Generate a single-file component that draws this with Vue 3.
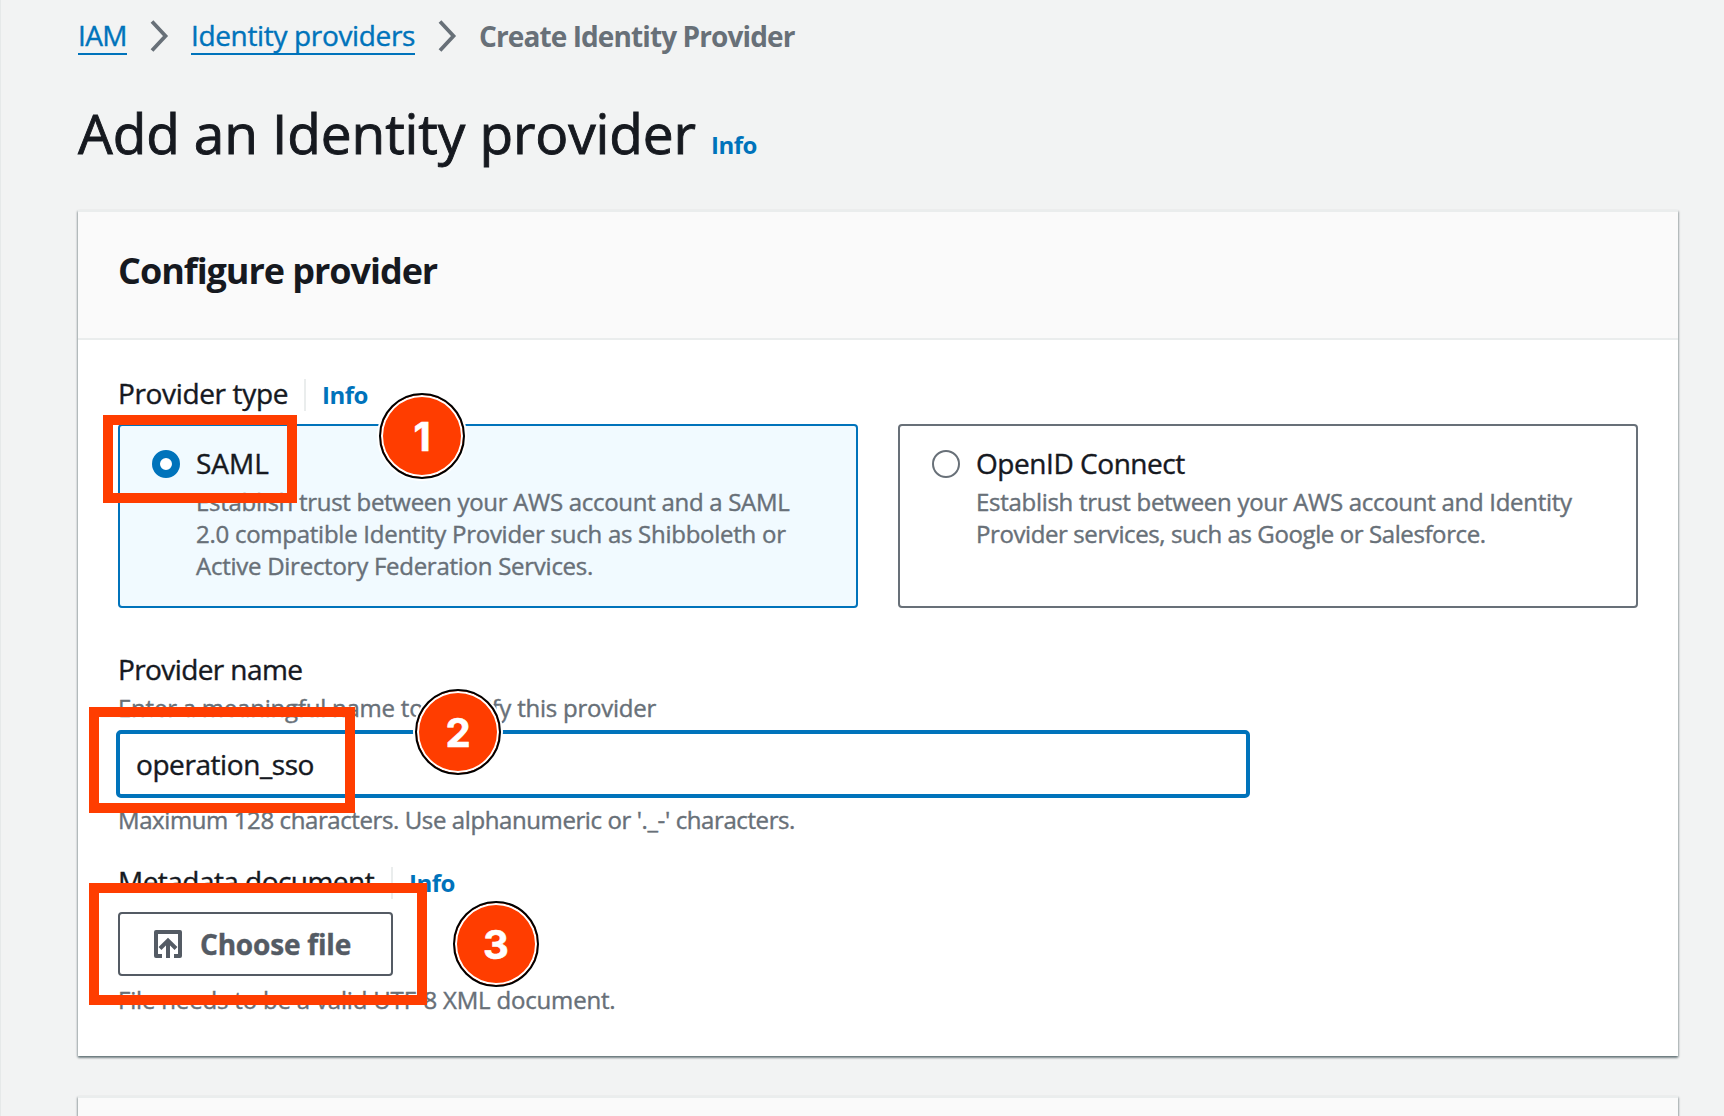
<script setup>
import { ref } from 'vue'

const selected = ref('saml')
const providerName = ref('operation_sso')

const types = [
  {
    id: 'saml',
    title: 'SAML',
    titleClass: 'track-none',
    lines: [
      { text: 'Establish trust between your AWS account and a SAML', cls: 'track-a' },
      { text: '2.0 compatible Identity Provider such as Shibboleth or', cls: 'track-b' },
      { text: 'Active Directory Federation Services.', cls: 'track-b' },
    ],
  },
  {
    id: 'oidc',
    title: 'OpenID Connect',
    titleClass: 'track-d',
    lines: [
      { text: 'Establish trust between your AWS account and Identity', cls: 'track-a' },
      { text: 'Provider services, such as Google or Salesforce.', cls: 'track-c' },
    ],
  },
]
</script>

<template>
  <div class="page">
    <nav class="crumbs">
      <a class="crumb-link iam">IAM</a>
      <svg class="chevron" width="20" height="32" viewBox="0 0 20 32"><path d="M2 1.5 15.5 16 2 30.5" /></svg>
      <a class="crumb-link providers">Identity providers</a>
      <svg class="chevron" width="20" height="32" viewBox="0 0 20 32"><path d="M2 1.5 15.5 16 2 30.5" /></svg>
      <span class="crumb-current">Create Identity Provider</span>
    </nav>

    <header class="heading">
      <h1>Add an Identity provider</h1>
      <a class="info">Info</a>
    </header>

    <section class="card">
      <div class="card-head"><h2>Configure provider</h2></div>
      <div class="card-body">
        <div class="label-row">
          <span class="label type-label">Provider type</span>
          <i class="sep"></i>
          <a class="info">Info</a>
        </div>

        <div class="tiles">
          <label v-for="t in types" :key="t.id" class="tile" :class="{ active: selected === t.id }">
            <span class="radio"></span>
            <span class="tile-text">
              <span class="tile-title" :class="t.titleClass">{{ t.title }}</span>
              <span v-for="l in t.lines" :key="l.text" class="hint" :class="l.cls">{{ l.text }}</span>
            </span>
          </label>
        </div>

        <div class="label name-label">Provider name</div>
        <div class="hint name-hint">Enter a meaningful name to identify this provider</div>
        <input v-model="providerName" class="field" type="text" spellcheck="false" />
        <div class="hint limit-hint">Maximum 128 characters. Use alphanumeric or '._-' characters.</div>

        <div class="label-row meta-row">
          <span class="label meta-label">Metadata document</span>
          <i class="sep"></i>
          <a class="info">Info</a>
        </div>
        <button class="file-btn" type="button">
          <svg width="28" height="28" viewBox="0 0 28 28">
            <path d="M8 26H2V2h24v24h-6" stroke-linejoin="round" />
            <path d="M14 28V10" />
            <path d="M6 18.5l8-8 8 8" />
          </svg>
          <span>Choose file</span>
        </button>
        <div class="hint file-hint">File needs to be a valid UTF-8 XML document.</div>
      </div>
    </section>

    <section class="card next-card"></section>

    <div class="mark mark-type"></div>
    <div class="mark mark-name"></div>
    <div class="mark mark-file"></div>
    <div class="step step-one">1</div>
    <div class="step step-two">2</div>
    <div class="step step-three">3</div>
  </div>
</template>

<style>
body {
  margin: 0;
  background: #f2f3f3;
}
</style>

<style scoped>
.page {
  position: relative;
  box-sizing: border-box;
  width: 1724px;
  height: 1116px;
  overflow: hidden;
  padding: 15px 46px 0 78px;
  background: #f2f3f3;
  box-shadow: inset 1px 0 0 #e6e9e9;
  font-family: "Open Sans", "Noto Sans", sans-serif;
  color: #16191f;
  -webkit-text-stroke-width: 0.4px;
}

.crumbs {
  display: flex;
  height: 40px;
  font-size: 28px;
  line-height: 40px;
  white-space: nowrap;
}
.crumb-link {
  box-sizing: border-box;
  height: 40px;
  color: #0073bb;
  border-bottom: 2px solid #0073bb;
}
.iam { width: 49px; letter-spacing: -0.6px; }
.providers { width: 224px; letter-spacing: -0.35px; }
.chevron {
  margin: 5px 21.5px 0 22.5px;
  fill: none;
  stroke: #687078;
  stroke-width: 3.8;
}
.crumb-current {
  padding-top: 1px;
  color: #687078;
  font-weight: 700;
  letter-spacing: -0.9px;
  -webkit-text-stroke-width: 0;
}

.heading {
  display: flex;
  align-items: baseline;
  height: 68px;
  margin: 43px 0 44px;
}
h1 {
  width: 633px;
  margin: 0;
  font-size: 55px;
  line-height: 69px;
  font-weight: 400;
  letter-spacing: -0.13px;
  white-space: nowrap;
  -webkit-text-stroke-width: 0.9px;
}
.info {
  color: #0073bb;
  font-size: 24px;
  line-height: 32px;
  font-weight: 700;
  letter-spacing: -0.5px;
  -webkit-text-stroke-width: 0;
}

.card {
  width: 1600px;
  height: 846px;
  box-sizing: border-box;
  background: #fff;
  border-top: 2px solid #eaeded;
  box-shadow: 0 2px 2px rgba(0, 28, 36, 0.4), 1px 1px 2px rgba(0, 28, 36, 0.2), -1px 1px 2px rgba(0, 28, 36, 0.2);
}
.card-head {
  box-sizing: border-box;
  height: 128px;
  padding: 37px 40px 0;
  background: #fafafa;
  border-bottom: 2px solid #eaeded;
}
h2 {
  margin: 0;
  font-size: 36px;
  line-height: 44px;
  font-weight: 700;
  letter-spacing: -1.05px;
  -webkit-text-stroke-width: 0;
}
.card-body {
  padding: 33px 40px 40px;
}
.label-row {
  display: flex;
  align-items: baseline;
  height: 40px;
}
.label {
  font-size: 28px;
  line-height: 40px;
  white-space: nowrap;
}
.type-label { width: 186px; letter-spacing: -0.35px; }
.sep {
  align-self: flex-start;
  width: 2px;
  height: 32px;
  margin: 6px 16px 0 0;
  background: #eaeded;
}

.tiles {
  display: flex;
  gap: 40px;
  margin-top: 11px;
}
.tile {
  display: flex;
  flex: 1;
  box-sizing: border-box;
  height: 184px;
  padding: 17px 28px 0;
  border: 2px solid #687078;
  border-radius: 4px;
}
.tile.active {
  border-color: #0073bb;
  background: #f1faff;
}
.radio {
  flex: none;
  box-sizing: border-box;
  width: 28px;
  height: 28px;
  margin: 7px 16px 0 4px;
  border: 2px solid #687078;
  border-radius: 50%;
  background: #fff;
}
.active .radio { border: 8px solid #0073bb; }
.tile-text { display: block; }
.tile-title {
  display: block;
  margin-bottom: 3px;
  font-size: 28px;
  line-height: 40px;
}
.hint {
  display: block;
  color: #687078;
  font-size: 24px;
  line-height: 32px;
  white-space: nowrap;
}
.track-none { letter-spacing: 0; }
.track-a { letter-spacing: -0.29px; }
.track-b { letter-spacing: -0.26px; }
.track-c { letter-spacing: -0.4px; }
.track-d { letter-spacing: -0.45px; }

.name-label { margin-top: 41px; letter-spacing: -0.6px; }
.name-hint { margin-top: 3px; letter-spacing: -0.23px; }
.field {
  display: block;
  box-sizing: border-box;
  width: 1134px;
  height: 68px;
  margin: 6px 0 6px -2px;
  padding: 0 16px 1px;
  border: 4px solid #0073bb;
  border-radius: 5px;
  outline: 0;
  background: #fff;
  color: #16191f;
  font-family: inherit;
  font-size: 28px;
  letter-spacing: -0.43px;
  -webkit-text-stroke-width: 0.4px;
}
.limit-hint { letter-spacing: -0.4px; }
.meta-row { margin-top: 25px; }
.meta-label { width: 273px; letter-spacing: -0.54px; }

.file-btn {
  display: flex;
  align-items: center;
  box-sizing: border-box;
  width: 275px;
  height: 64px;
  margin: 11px 0 8px;
  padding: 0 34px;
  border: 2px solid #545b64;
  border-radius: 4px;
  background: #fff;
  color: #545b64;
  font-family: inherit;
  font-size: 28px;
  line-height: 40px;
  font-weight: 700;
  letter-spacing: -0.19px;
  white-space: nowrap;
}
.file-btn svg {
  flex: none;
  margin-right: 18px;
  fill: none;
  stroke: #545b64;
  stroke-width: 4;
}
.file-hint { letter-spacing: -0.18px; }
.next-card {
  height: 60px;
  margin-top: 40px;
  background: #fafafa;
}

/* Walkthrough annotations laid over the form */
.mark {
  position: absolute;
  box-sizing: border-box;
  border: 10px solid #ff3d00;
}
.mark-type { left: 103px; top: 415px; width: 194px; height: 88px; }
.mark-name { left: 89px; top: 707px; width: 266px; height: 106px; }
.mark-file { left: 89px; top: 883px; width: 338px; height: 122px; }
.step {
  position: absolute;
  box-sizing: border-box;
  width: 86px;
  height: 86px;
  border: 2px solid #000;
  border-radius: 50%;
  background: #ff3d00;
  box-shadow: 0 0 0 2px #fff, inset 0 0 0 2px #fff;
  color: #fff;
  font-family: Inter, sans-serif;
  font-size: 40px;
  line-height: 83px;
  font-weight: 700;
  text-align: center;
  -webkit-text-stroke: 0.6px #fff;
}
.step-one { left: 379px; top: 393px; }
.step-two { left: 415px; top: 689px; }
.step-three { left: 453px; top: 901px; }
</style>
